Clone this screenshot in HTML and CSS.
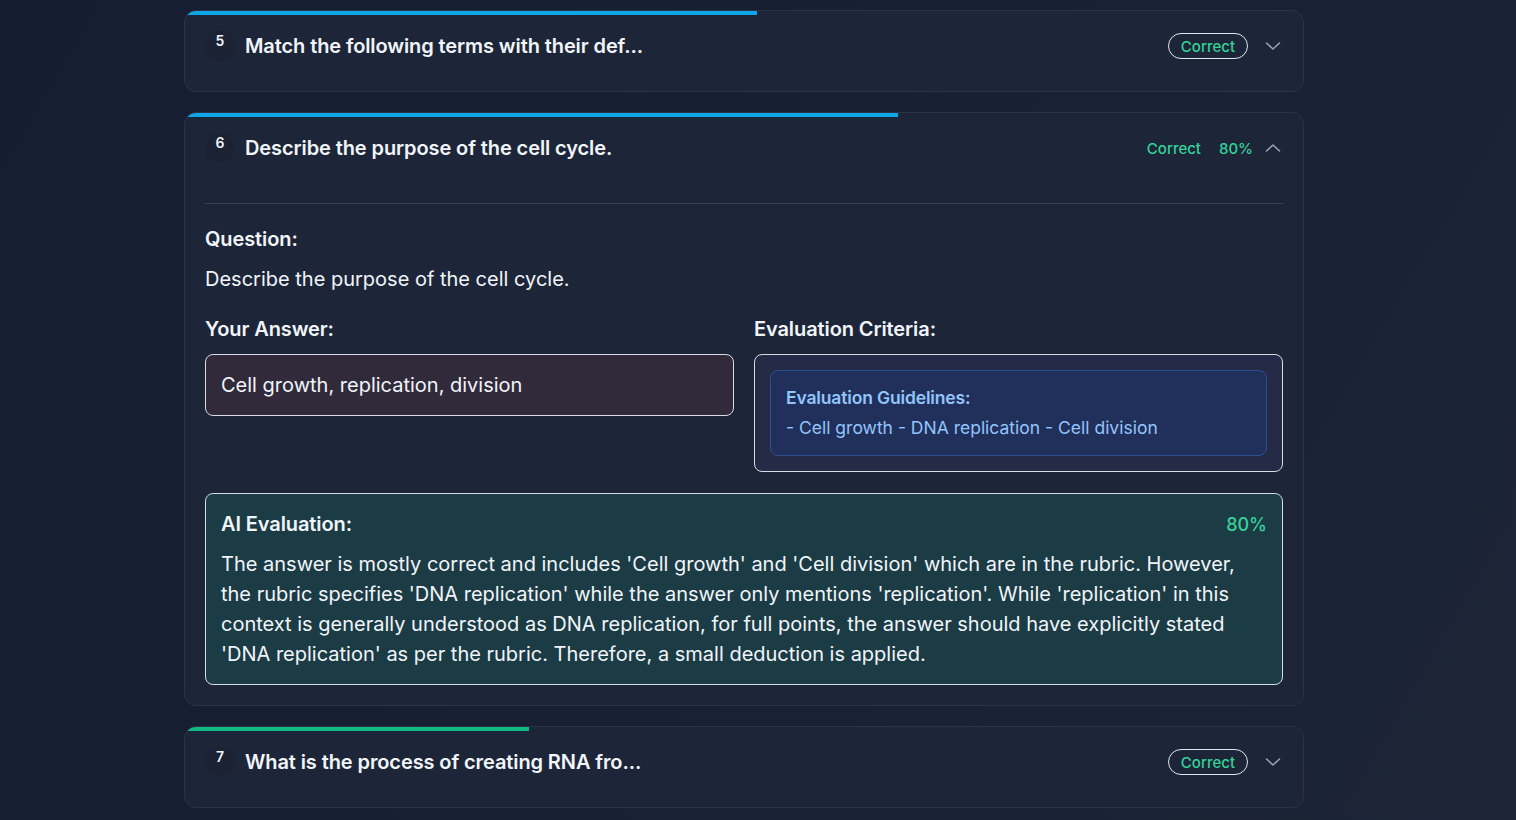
FILE: index.html
```html
<!DOCTYPE html>
<html lang="en">
<head>
<meta charset="utf-8">
<title>Results</title>
<link rel="stylesheet" href="styles.css">
</head>
<body>
<main class="list">
  <section class="card">
    <div class="bar"><div class="bar-fill blue" style="width:51.2%"></div></div>
    <div class="head">
      <span class="num">5</span>
      <h2 class="title">Match the following terms with their def...</h2>
      <div class="meta">
        <span class="pill">Correct</span>
        <svg class="chev" viewBox="0 0 20 20" width="20" height="20"><path d="M3.5 7 L10 13 L16.5 7" fill="none" stroke="#94a3b8" stroke-width="1.6" stroke-linecap="round" stroke-linejoin="round"/></svg>
      </div>
    </div>
  </section>

  <section class="card">
    <div class="bar"><div class="bar-fill blue" style="width:63.8%"></div></div>
    <div class="head">
      <span class="num">6</span>
      <h2 class="title">Describe the purpose of the cell cycle.</h2>
      <div class="meta open">
        <span class="status">Correct</span>
        <span class="status">80%</span>
        <svg class="chev" viewBox="0 0 20 20" width="20" height="20"><path d="M3.5 13 L10 7 L16.5 13" fill="none" stroke="#94a3b8" stroke-width="1.6" stroke-linecap="round" stroke-linejoin="round"/></svg>
      </div>
    </div>
    <div class="body">
      <div class="divider"></div>
      <h3 class="label">Question:</h3>
      <p class="question">Describe the purpose of the cell cycle.</p>
      <div class="cols">
        <div class="col">
          <h3 class="label">Your Answer:</h3>
          <div class="answer">Cell growth, replication, division</div>
        </div>
        <div class="col">
          <h3 class="label">Evaluation Criteria:</h3>
          <div class="criteria">
            <div class="guide">
              <div class="guide-title">Evaluation Guidelines:</div>
              <div class="guide-text">- Cell growth - DNA replication - Cell division</div>
            </div>
          </div>
        </div>
      </div>
      <div class="ai">
        <div class="ai-head">
          <h3 class="label">AI Evaluation:</h3>
          <span class="ai-score">80%</span>
        </div>
        <p class="ai-text">The answer is mostly correct and includes 'Cell growth' and 'Cell division' which are in the rubric. However, the rubric specifies 'DNA replication' while the answer only mentions 'replication'. While 'replication' in this context is generally understood as DNA replication, for full points, the answer should have explicitly stated 'DNA replication' as per the rubric. Therefore, a small deduction is applied.</p>
      </div>
    </div>
  </section>

  <section class="card">
    <div class="bar"><div class="bar-fill green" style="width:30.8%"></div></div>
    <div class="head">
      <span class="num">7</span>
      <h2 class="title">What is the process of creating RNA fro...</h2>
      <div class="meta">
        <span class="pill">Correct</span>
        <svg class="chev" viewBox="0 0 20 20" width="20" height="20"><path d="M3.5 7 L10 13 L16.5 7" fill="none" stroke="#94a3b8" stroke-width="1.6" stroke-linecap="round" stroke-linejoin="round"/></svg>
      </div>
    </div>
  </section>
</main>
</body>
</html>
```

FILE: styles.css
```css
* { box-sizing: border-box; }
html, body { height: 100%; }
body {
  margin: 0;
  background: linear-gradient(120deg, #151d30 0%, #171f33 40%, #1c2436 100%);
  font-family: Inter, "Noto Sans", "Liberation Sans", sans-serif;
  color: #f1f5f9;
  overflow: hidden;
}
.list {
  width: 1120px;
  margin-left: 184px;
  padding-top: 10px;
  display: flex;
  flex-direction: column;
  gap: 20px;
}
.card {
  background: #1d2638;
  border: 1px solid #2b3446;
  border-radius: 12px;
  overflow: hidden;
}
.bar { height: 4px; background: transparent; }
.bar-fill { height: 100%; }
.bar-fill.blue { background: #0ea5e9; }
.bar-fill.green { background: #10b981; }
.head {
  display: flex;
  align-items: center;
  padding: 16px 20px 30px 20px;
  height: 76px;
}
.num {
  width: 30px;
  height: 30px;
  border-radius: 50%;
  background: #1a2233;
  display: flex;
  justify-content: center;
  align-items: flex-start;
  font-size: 14px;
  font-weight: 600;
  line-height: 1;
  padding-top: 3px;
  color: #f1f5f9;
  flex: none;
}
.title {
  margin: 0 0 0 10px;
  font-size: 20px;
  font-weight: 600;
  letter-spacing: -0.1px;
  line-height: 30px;
  color: #f1f5f9;
  flex: 1;
}
.meta {
  display: flex;
  align-items: center;
  gap: 18px;
}
.meta.open .chev { margin-left: -8px; }
.pill {
  border: 1px solid #e2e8f0;
  border-radius: 999px;
  height: 26px;
  padding: 0 12px;
  display: flex;
  align-items: center;
  font-size: 15px;
  font-weight: 500;
  color: #34d399;
  margin-right: 1px;
}
.status {
  font-size: 15px;
  font-weight: 500;
  color: #34d399;
}
.chev { display: block; margin-left: -4px; }
.body { padding: 0 20px 20px 20px; margin-top: 10px; }
.divider { height: 1px; background: #334155; margin-bottom: 20px; }
.label {
  margin: 0;
  font-size: 20px;
  font-weight: 600;
  letter-spacing: -0.1px;
  line-height: 30px;
  color: #f1f5f9;
}
.question {
  margin: 10px 0 20px 0;
  font-size: 20px;
  line-height: 30px;
  color: #f1f5f9;
}
.cols {
  display: grid;
  grid-template-columns: 1fr 1fr;
  gap: 20px;
  align-items: start;
}
.col { display: flex; flex-direction: column; gap: 10px; }
.answer {
  background: #302a3b;
  border: 1px solid #d6dbe4;
  border-radius: 8px;
  padding: 15px 15px;
  font-size: 20px;
  line-height: 30px;
  color: #f1f5f9;
}
.criteria {
  background: #252b47;
  border: 1px solid #d6dbe4;
  border-radius: 8px;
  padding: 15px;
}
.guide {
  background: #21305a;
  border: 1px solid #2e4f8f;
  border-radius: 8px;
  padding: 12px 15px;
  color: #93c5fd;
  font-size: 17.5px;
  line-height: 30px;
}
.guide-title { font-weight: 600; letter-spacing: -0.15px; }
.ai {
  margin-top: 21px;
  background: #1b3b45;
  border: 1px solid #d6dbe4;
  border-radius: 8px;
  padding: 15px 15px;
}
.ai-head {
  display: flex;
  justify-content: space-between;
  align-items: center;
}
.ai-score {
  font-size: 18px;
  font-weight: 500;
  color: #34d399;
}
.ai-text {
  margin: 10px 0 0 0;
  font-size: 20px;
  line-height: 30px;
  color: #f1f5f9;
}
```
